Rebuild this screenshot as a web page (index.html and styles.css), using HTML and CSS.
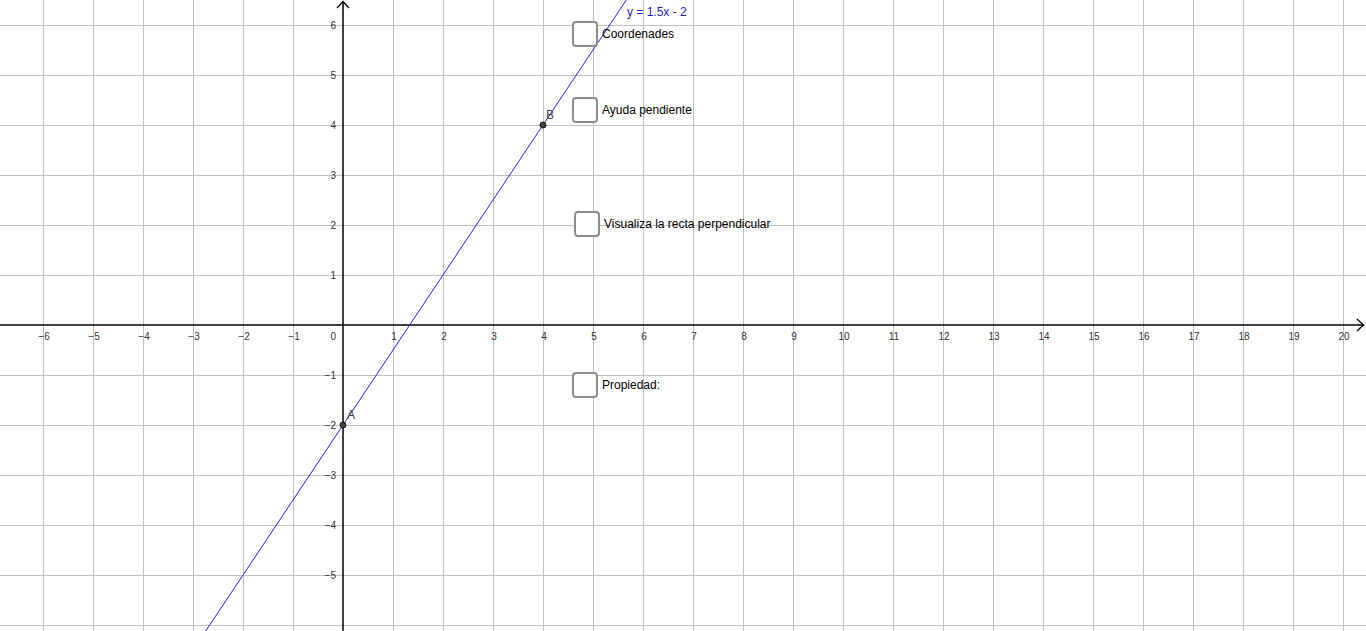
FILE: index.html
```html
<!DOCTYPE html>
<html lang="es">
<head>
<meta charset="utf-8">
<title>Recta y = 1.5x - 2</title>
<link rel="stylesheet" href="styles.css">
</head>
<body>
<div class="stage">
  <svg class="graph" width="1366" height="631" viewBox="0 0 1366 631" xmlns="http://www.w3.org/2000/svg">
    <g id="grid" class="grid"></g>
    <g class="axes">
      <line x1="0" y1="325" x2="1364" y2="325"/>
      <line x1="343" y1="631" x2="343" y2="2"/>
      <polyline class="arrow" points="1357,319 1363.5,325 1357,331"/>
      <polyline class="arrow" points="337,8 343,1.5 349,8"/>
    </g>
    <g id="labels" class="ticklabels"></g>
    <line class="fn" x1="205.7" y1="631" x2="626.3" y2="0"/>
    <text class="fnlabel" x="627" y="16">y = 1.5x - 2</text>
    <circle class="pt" cx="343" cy="425" r="3"/>
    <text class="ptlabel" x="347" y="419">A</text>
    <circle class="pt" cx="543" cy="125" r="3"/>
    <text class="ptlabel" x="546" y="119">B</text>
  </svg>

  <label class="cb cb-coord"><span class="box"></span><span class="txt">Coordenades</span></label>
  <label class="cb cb-ayuda"><span class="box"></span><span class="txt">Ayuda pendiente</span></label>
  <label class="cb cb-visual"><span class="box"></span><span class="txt">Visualiza la recta perpendicular</span></label>
  <label class="cb cb-prop"><span class="box"></span><span class="txt">Propiedad:</span></label>
</div>
<script>
(function () {
  var ns = "http://www.w3.org/2000/svg";
  var grid = document.getElementById("grid");
  var labels = document.getElementById("labels");
  function el(name, attrs, parent, text) {
    var e = document.createElementNS(ns, name);
    for (var k in attrs) e.setAttribute(k, attrs[k]);
    if (text !== undefined) e.textContent = text;
    parent.appendChild(e);
    return e;
  }
  for (var i = -7; i <= 21; i++) {
    var x = 343 + 50 * i + 0.5;
    if (i !== 0) el("line", {x1: x, y1: 0, x2: x, y2: 631}, grid);
  }
  for (var j = -7; j <= 7; j++) {
    var y = 325 - 50 * j + 0.5;
    if (j !== 0) el("line", {x1: 0, y1: y, x2: 1366, y2: y}, grid);
  }
  function fmt(n) { return n < 0 ? "\u2212" + (-n) : String(n); }
  for (var a = -6; a <= 20; a++) {
    if (a === 0) continue;
    el("text", {x: 343 + 50 * a + 1, y: 340, "text-anchor": "middle"}, labels, fmt(a));
  }
  el("text", {x: 336, y: 340, "text-anchor": "end"}, labels, "0");
  for (var b = -5; b <= 6; b++) {
    if (b === 0) continue;
    el("text", {x: 336, y: 325 - 50 * b + 4, "text-anchor": "end"}, labels, fmt(b));
  }
})();
</script>
</body>
</html>
```

FILE: styles.css
```css
html, body {
  margin: 0;
  padding: 0;
  background: #ffffff;
  overflow: hidden;
}

.stage {
  position: relative;
  width: 1366px;
  height: 631px;
  font-family: "Liberation Sans", Arial, sans-serif;
}

.graph {
  display: block;
}

.grid line {
  stroke: #c0c0c0;
  stroke-width: 1;
}

.axes line {
  stroke: #000000;
  stroke-width: 1.5;
}

.axes .arrow {
  fill: none;
  stroke: #000000;
  stroke-width: 1.2;
}

.ticklabels text {
  font-family: "Liberation Sans", Arial, sans-serif;
  font-size: 10px;
  fill: #333333;
}

.fn {
  stroke: #2020ee;
  stroke-width: 1;
}

.fnlabel {
  font-family: "Liberation Sans", Arial, sans-serif;
  font-size: 12px;
  fill: #1a1acc;
}

.pt {
  fill: #444444;
  stroke: #111111;
  stroke-width: 1;
}

.ptlabel {
  font-family: "Liberation Sans", Arial, sans-serif;
  font-size: 12px;
  fill: #444444;
}

.cb {
  position: absolute;
  display: flex;
  align-items: center;
  gap: 4px;
  font-size: 12px;
  color: #000000;
  cursor: pointer;
}

.cb .box {
  width: 22px;
  height: 22px;
  border: 2px solid #8c8c8c;
  border-radius: 4px;
  background: #ffffff;
  box-sizing: content-box;
}

.cb .txt {
  white-space: nowrap;
  margin-left: 0;
}

.cb-coord { left: 572px; top: 21px; }
.cb-ayuda { left: 572px; top: 97px; }
.cb-visual { left: 574px; top: 211px; }
.cb-prop { left: 572px; top: 372px; }
```
